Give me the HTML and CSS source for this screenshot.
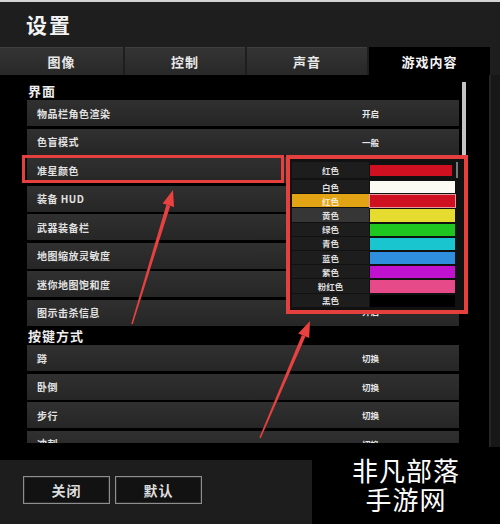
FILE: index.html
```html
<!DOCTYPE html>
<html lang="zh-CN">

<head>
    <meta charset="UTF-8">
    <meta name="viewport" content="width=device-width, initial-scale=1.0">
    <title>设置</title>
    <link rel="stylesheet" href="styles.css">
</head>

<body>
    <div class="window">
        <div class="title">设置</div>

        <div class="tabs">
            <div class="tab">图像</div>
            <div class="tab">控制</div>
            <div class="tab">声音</div>
            <div class="tab active">游戏内容</div>
        </div>

        <div class="main">
            <div class="panel">
                <div class="list">
                    <div class="group-title">界面</div>
                    <div class="rows">
                        <div class="row"><span class="name">物品栏角色渲染</span><span class="val">开启</span></div>
                        <div class="row"><span class="name">色盲模式</span><span class="val">一般</span></div>
                        <div class="row"><span class="name">准星颜色</span><span class="val">红色</span></div>
                        <div class="row"><span class="name">装备 HUD</span><span class="val">开启</span></div>
                        <div class="row"><span class="name">武器装备栏</span><span class="val">开启</span></div>
                        <div class="row"><span class="name">地图缩放灵敏度</span><span class="val">50</span></div>
                        <div class="row"><span class="name">迷你地图饱和度</span><span class="val">50</span></div>
                        <div class="row"><span class="name">图示击杀信息</span><span class="val low">开启</span></div>
                    </div>

                    <div class="group-title">按键方式</div>
                    <div class="rows">
                        <div class="row"><span class="name">蹲</span><span class="val">切换</span></div>
                        <div class="row"><span class="name">卧倒</span><span class="val">切换</span></div>
                        <div class="row"><span class="name">步行</span><span class="val">切换</span></div>
                        <div class="row"><span class="name">冲刺</span><span class="val">切换</span></div>
                    </div>
                </div>
                <div class="scrollbar"><div class="thumb"></div></div>
            </div>
            <div class="side"></div>
        </div>

        <div class="footer">
            <div class="btn">关闭</div>
            <div class="btn">默认</div>
        </div>

        <!-- 标注框 -->
        <div class="mark-row"></div>

        <div class="dropdown">
            <div class="dd-current">
                <span class="dd-label">红色</span>
                <span class="dd-swatch red"></span>
                <span class="dd-track"></span>
            </div>
            <div class="dd-list">
                <div class="dd-item"><span class="dd-label">白色</span><span class="dd-swatch white"></span></div>
                <div class="dd-item selected"><span class="dd-label">红色</span><span class="dd-swatch red"></span></div>
                <div class="dd-item hover"><span class="dd-label">黄色</span><span class="dd-swatch yellow"></span></div>
                <div class="dd-item"><span class="dd-label">绿色</span><span class="dd-swatch green"></span></div>
                <div class="dd-item"><span class="dd-label">青色</span><span class="dd-swatch cyan"></span></div>
                <div class="dd-item"><span class="dd-label">蓝色</span><span class="dd-swatch blue"></span></div>
                <div class="dd-item"><span class="dd-label">紫色</span><span class="dd-swatch purple"></span></div>
                <div class="dd-item"><span class="dd-label">粉红色</span><span class="dd-swatch pink"></span></div>
                <div class="dd-item"><span class="dd-label">黑色</span><span class="dd-swatch black"></span></div>
            </div>
        </div>

        <svg class="arrows" width="500" height="524" viewBox="0 0 500 524">
            <polygon points="132.7,324.2 131.3,323.8 166.4,204.7 170.2,205.9" />
            <polygon points="173,190 174.1,207.1 162.6,203.5" />
            <polygon points="260.7,438.3 259.3,437.7 301.9,334.9 305.5,336.5" />
            <polygon points="310,321 309.2,338.1 298.2,333.4" />
        </svg>

        <div class="watermark">
            <div>非凡部落</div>
            <div>手游网</div>
        </div>
    </div>
</body>

</html>
```

FILE: styles.css
```css
* {
    margin: 0px;
    padding: 0px;
    box-sizing: border-box;
}

body {
    width: 500px;
    height: 524px;
    overflow: hidden;
    background-color: #1e1e1e;
    font-family: "Noto Sans CJK SC", "Noto Sans", sans-serif;
    color: #e6e6e6;
}

.window {
    position: relative;
    width: 500px;
    height: 524px;
}

.title {
    height: 47px;
    border-top: 2px solid #d4d4d4;
    padding-left: 26px;
    line-height: 45px;
    font-size: 21px;
    font-weight: 700;
    letter-spacing: 2px;
    color: #f2f2f2;
}

/* 选项卡 */
.tabs {
    display: flex;
    gap: 2px;
    width: 490px;
    height: 28px;
}

.tab {
    width: 120px;
    display: flex;
    align-items: center;
    justify-content: center;
    background: linear-gradient(#343434, #282828);
    border-top: 1px solid #3e3e3e;
    font-size: 13px;
    font-weight: 700;
    letter-spacing: 1px;
    color: #e8e8e8;
}

.tab:first-child {
    width: 123px;
}

.tab.active {
    width: 121px;
    background: #000;
    border-top-color: #000;
    color: #f4f4f4;
}

.main {
    display: flex;
    height: 385px;
}

.panel {
    display: flex;
    width: 490px;
    background-color: #000;
    padding-left: 27px;
    border-right: 1px solid #262626;
}

.list {
    width: 432px;
    height: 368px;
    overflow: hidden;
    padding-top: 6px;
}

.group-title {
    height: 19px;
    line-height: 19px;
    padding-left: 1px;
    font-size: 13px;
    font-weight: 700;
    letter-spacing: 1px;
    color: #eeeeee;
}

.rows + .group-title {
    margin-top: 0.5px;
}

.rows {
    display: flex;
    flex-direction: column;
    gap: 2.5px;
}

.row {
    display: flex;
    align-items: center;
    height: 26px;
    flex-shrink: 0;
    background: linear-gradient(#303030, #262626);
}

.row .name {
    width: 335px;
    padding-left: 10px;
    font-size: 10px;
    font-weight: 700;
    letter-spacing: 0.5px;
    color: #e2e2e2;
}

.row .val {
    font-size: 8.5px;
    font-weight: 700;
    color: #e8e8e8;
}

/* 被下拉框遮住，只露出一点 */
.row .val.low {
    margin-bottom: 3px;
}

.scrollbar {
    width: 4px;
    margin-left: 3px;
}

.scrollbar .thumb {
    margin-top: 7px;
    height: 80px;
    background-color: #c4c4c4;
}

.side {
    width: 10px;
    background-color: #171717;
    border-left: 1px solid #242424;
}

.footer {
    display: flex;
    align-items: flex-start;
    gap: 5px;
    width: 312px;
    height: 64px;
    padding: 16px 0 0 23px;
    background-color: #1d1d1d;
}

.btn {
    width: 87px;
    height: 28px;
    display: flex;
    align-items: center;
    justify-content: center;
    border: 1px solid #8e8e8e;
    background-color: #121212;
    box-shadow: inset 0 0 0 1px #2a2a2a;
    font-size: 14px;
    font-weight: 700;
    letter-spacing: 1px;
    color: #dcdcdc;
}

/* 红色标注 */
.mark-row {
    position: absolute;
    left: 22px;
    top: 155px;
    width: 262px;
    height: 28px;
    border: 3px solid #e5403e;
}

.dropdown {
    position: absolute;
    left: 286px;
    top: 155px;
    width: 182px;
    height: 159px;
    border: 4px solid #e5403e;
    background-color: #111;
    padding: 3px 0 0 2px;
}

.dd-current {
    display: flex;
    height: 16px;
}

.dd-label {
    width: 77px;
    display: flex;
    align-items: center;
    justify-content: center;
    background-color: #1d1d1d;
    font-size: 8.5px;
    font-weight: 700;
    color: #dddddd;
}

.dd-swatch {
    margin-left: 1px;
}

.dd-current .dd-swatch {
    width: 82px;
    margin-top: 3px;
    height: 11px;
}

.dd-track {
    width: 2px;
    margin-left: 4px;
    background-color: #7a7a7a;
}

.dd-list {
    margin-top: 2px;
}

.dd-item {
    display: flex;
    height: 14.2px;
}

.dd-item .dd-label {
    height: 13.2px;
}

.dd-item .dd-swatch {
    width: 85px;
    margin-top: 1px;
    height: 12.2px;
}

.dd-item.hover .dd-label {
    background-color: #363636;
}

.dd-item.selected .dd-label {
    background-color: #e2a414;
    color: #f6ead0;
}

.dd-item.selected .dd-swatch {
    outline: 1px solid #e49a9a;
}

.red { background-color: #cf1020; }
.white { background-color: #fbfbf4; }
.yellow { background-color: #e6dc30; }
.green { background-color: #1fc61f; }
.cyan { background-color: #19c6cf; }
.blue { background-color: #2f8fde; }
.purple { background-color: #c012cf; }
.pink { background-color: #e64a88; }
.black { background-color: #000; }

.arrows {
    position: absolute;
    left: 0;
    top: 0;
    pointer-events: none;
}

.arrows polygon {
    fill: #e8413f;
}

.watermark {
    position: absolute;
    left: 312px;
    top: 447px;
    width: 188px;
    height: 77px;
    padding-top: 8px;
    background-color: #000;
    text-align: center;
    font-size: 26px;
    line-height: 29px;
    letter-spacing: 1px;
    color: #ffffff;
}
```
